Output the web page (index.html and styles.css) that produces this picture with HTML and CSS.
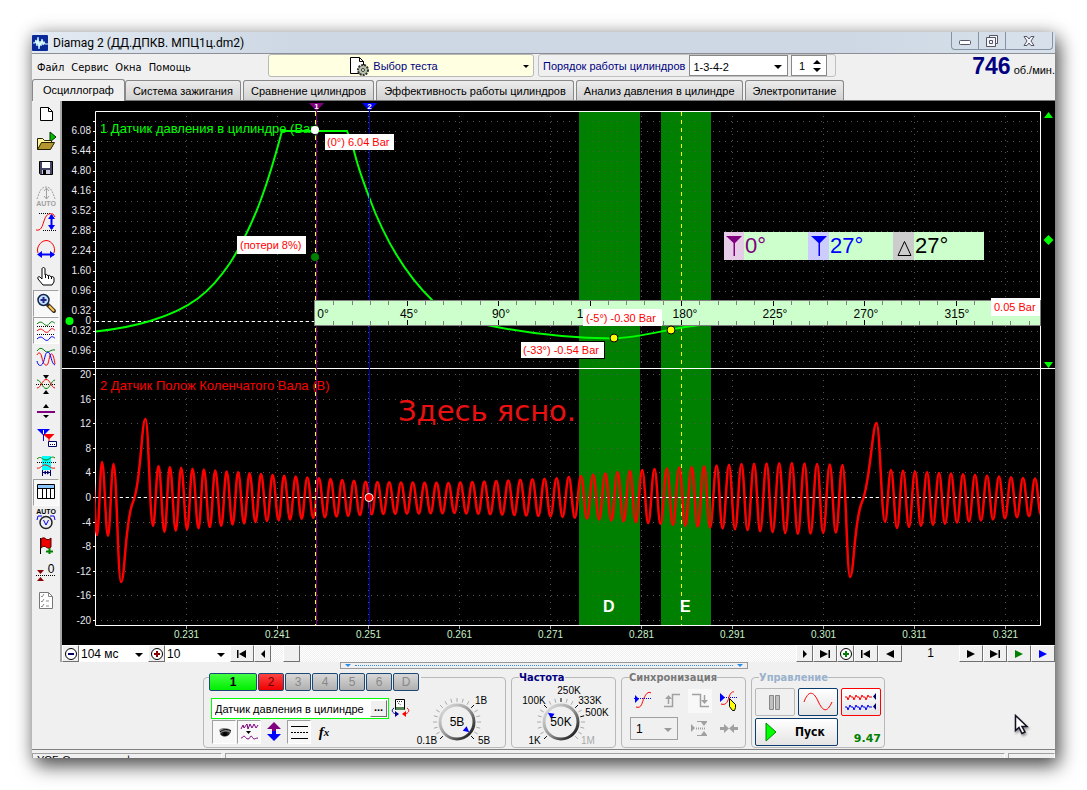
FILE: index.html
```html
<!DOCTYPE html>
<html lang="ru">
<head>
<meta charset="utf-8">
<title>Diamag 2</title>
<link rel="stylesheet" href="styles.css">
</head>
<body>
<main class="window">
  <header class="titlebar">
    <svg class="app-icon" width="16" height="16" viewBox="0 0 16 16"><rect width="16" height="16" rx="1" fill="#0a2a9a"/><path d="M1 8h2l1-3 1 6 1-9 1 12 1-8 1 5 1-7 1 6 1-3 1 2h3" fill="none" stroke="#dff" stroke-width="1.2"/></svg>
    <span class="title">Diamag 2 (ДД.ДПКВ. МПЦ1ц.dm2)</span>
    <div class="winbtns">
      <button aria-label="Свернуть"><svg width="14" height="14" viewBox="0 0 14 14"><rect x="1.500" y="6.500" width="11" height="4" rx="1" fill="#fff" stroke="#556"/></svg></button>
      <button aria-label="Развернуть"><svg width="14" height="14" viewBox="0 0 14 14"><path d="M4.500 3.500v-2h8v8h-2M1.500 3.500h9v9h-9zM4.500 6.500h3v3h-3z" fill="#f4f6f9" stroke="#556"/></svg></button>
      <button class="close" aria-label="Закрыть"><svg width="14" height="14" viewBox="0 0 14 14"><path d="M2 2.500h3l2 2.500 2-2.500h3L9 7l3 4.500H9L7 9l-2 2.500H2L5 7z" fill="#f4f6f9" stroke="#556"/></svg></button>
    </div>
  </header>

  <div class="menurow">
    <nav class="menu"><a href="#">Файл</a><a href="#">Сервис</a><a href="#">Окна</a><a href="#">Помощь</a></nav>
    <button class="testpick">
      <svg width="22" height="22" viewBox="0 0 22 22"><path d="M2.500 2.500h9l4 4v12h-13z" fill="#fff" stroke="#000"/><path d="M11.500 2.500v4h4" fill="none" stroke="#000"/><circle cx="15" cy="15" r="5" fill="#b8c4a8" stroke="#333" stroke-width="2" stroke-dasharray="2 1"/><circle cx="15" cy="15" r="1.500" fill="#fff" stroke="#333"/></svg>
      <span>Выбор теста</span><i class="tri"></i>
    </button>
    <div class="order">
      <label for="ord">Порядок работы цилиндров</label>
      <span class="combo ord-combo"><select id="ord"><option>1-3-4-2</option></select></span>
      <span class="spin"><input aria-label="Цилиндр" value="1"><svg width="10" height="14" viewBox="0 0 10 14"><path d="M1 5L5 1l4 4zM1 9h8l-4 4z"/></svg></span>
    </div>
    <div class="rpm"><b>746</b><span>об./мин.</span></div>
  </div>

  <div class="tabs" role="tablist">
    <button class="tab active" role="tab">Осциллограф</button>
    <button class="tab" role="tab">Система зажигания</button>
    <button class="tab" role="tab">Сравнение цилиндров</button>
    <button class="tab" role="tab">Эффективность работы цилиндров</button>
    <button class="tab" role="tab">Анализ давления в цилиндре</button>
    <button class="tab" role="tab">Электропитание</button>
  </div>

  <div class="work">
    <aside class="tools">
      <button aria-label="Новый"><svg viewBox="0 0 26 27"><path d="M7.500 6.500h8l4 4v9h-12z" fill="#fff" stroke="#000"/><path d="M15.500 6.500v4h4" fill="none" stroke="#000"/></svg></button>
      <button aria-label="Открыть"><svg viewBox="0 0 26 27"><path d="M17 4l6 5-6 5z" fill="#0b0" stroke="#030"/><path d="M4.500 21.500v-11h5l2 2h7v3" fill="#fff29a" stroke="#220"/><path d="M4.500 21.500l4-7h13l-4 7z" fill="#b59530" stroke="#220"/></svg></button>
      <button aria-label="Сохранить"><svg viewBox="0 0 26 27"><path d="M6.500 6.500h13v13h-12l-1-1z" fill="#446" stroke="#000"/><path d="M9 7h8v6H9z" fill="#fff"/><path d="M9 15h8v4H9z" fill="#ccd"/><path d="M10 15h3v4h-3z" fill="#000"/></svg></button>
      <button aria-label="Авто" disabled><svg viewBox="0 0 26 27"><g fill="none" stroke="#a0a0a0"><path d="M4 17c2-5 3-12 9-12s7 7 9 12" stroke-dasharray="2 1"/><path d="M13.500 7v10M11 9l2.500-3L16 9M11 14l2.500 3 2.500-3"/></g><text x="13" y="24" class="t-auto" fill="#a0a0a0">AUTO</text></svg></button>
      <button aria-label="Амплитуда"><svg viewBox="0 0 26 27"><path d="M6 4.500h11M10 21.500h13" stroke="#000" stroke-dasharray="1 1"/><path d="M3 21c5 1 6-3 8-9s4-8 9-7l2 3" fill="none" stroke="red"/><path d="M18.500 6v14" stroke="#00f" stroke-width="2"/><path d="M15 10l3.500-5L22 10zM15 16l3.500 5 3.500-5z" fill="#00f"/></svg></button>
      <button aria-label="Период"><svg viewBox="0 0 26 27"><path d="M5 17c-2-5 2-12 8-12.500 6 0 10 7 8 12.500" fill="none" stroke="red"/><path d="M6 18.500h15" stroke="#00f" stroke-width="2"/><path d="M9 15l-5 3.500L9 22zM17 15l5 3.500-5 3.500z" fill="#00f"/></svg></button>
      <button aria-label="Рука"><svg viewBox="0 0 26 27"><path d="M10 22l-5-6c-1-2 1-3 2-2l2 2V6c0-2 3-2 3 0v6c1-1 2-1 3 1 1-1 2-1 3 1 1-1 3 0 3 1v4l-2 3z" fill="#fff" stroke="#000"/><path d="M12.500 12v3M15.500 13v3M18.500 14v2" stroke="#000"/></svg></button>
      <button class="on" aria-label="Лупа"><svg viewBox="0 0 26 27"><path d="M15 15l6 6" stroke="#432" stroke-width="4" stroke-linecap="round"/><path d="M16 16l5 5" stroke="#fc5" stroke-width="2"/><circle cx="10.500" cy="10" r="5.500" fill="#bfe0ff" stroke="#124" stroke-width="1.500"/><path d="M10.500 7v6M7.500 10h6" stroke="#228" stroke-width="2"/></svg></button>
      <button class="on" aria-label="Раздельно"><svg viewBox="0 0 26 27"><g fill="none"><path d="M4 7c3-3 5-2 7 0s4 2 6-1 4 0 5 0" stroke="green"/><path d="M4 14c3-3 5-2 7 0s4 2 6-1 4 0 5 0" stroke="red"/><path d="M4 22c3-3 5-2 7 0s4 2 6-1 4 0 5 0" stroke="blue"/><path d="M4 9.500h18M4 17.500h18" stroke="#000" stroke-dasharray="1 1"/></g></svg></button>
      <button aria-label="Вместе"><svg viewBox="0 0 26 27"><g fill="none"><path d="M4 7c3-4 5-3 8 0s6-2 10-1" stroke="green"/><path d="M4 11c2-4 4-2 5 3s3 8 5 7 2-10 4-11 3 4 4 10" stroke="red"/><path d="M4 17c1 5 4 6 6 2s2-11 5-11 3 12 7 13" stroke="blue"/></g></svg></button>
      <button aria-label="Сжать"><svg viewBox="0 0 26 27"><path d="M10 4h6l-3 4zM10 23h6l-3-4z"/><path d="M3 13.500h20" stroke="#000" stroke-dasharray="1 1"/><g fill="none"><path d="M4 9c4 0 5 8 9 8.500s5-8 9-8.500" stroke="green"/><path d="M4 17c4 0 5-8 9-8.500s5 8 9 8.500" stroke="red"/></g></svg></button>
      <button aria-label="Уровень"><svg viewBox="0 0 26 27"><path d="M10 10l3-4 3 4zM10 17l3 3 3-3z"/><path d="M4 14h18" stroke="purple" stroke-width="2"/></svg></button>
      <button aria-label="Маркеры"><svg viewBox="0 0 26 27"><path d="M9.500 9h12l-5 5v6h-1v-6z" fill="red"/><path d="M4 4h13l-6 6v6h-1v-6z" fill="#00f"/><path d="M10.500 5v4" stroke="#fff"/><path d="M15.500 16.500h8v5h-8z" fill="#fff" stroke="#006"/><path d="M17 19.500h5" stroke="#006" stroke-dasharray="1 1"/></svg></button>
      <button aria-label="Диапазон"><svg viewBox="0 0 26 27"><path d="M9 4h9v14H9z" fill="#0ff"/><path d="M4 10.500h19" stroke="#000" stroke-dasharray="1 1"/><g fill="none"><path d="M4 7c4-4 5 1 9 1s5-5 9-2" stroke="green"/><path d="M4 16c4 1 5-4 9-3s5 4 9 3" stroke="red"/></g><path d="M9.500 18v6M17.500 18v6M10 20.500h7" stroke="#006"/><path d="M10 20.500l3-2v4zM17 20.500l-3-2v4z" fill="#006"/></svg></button>
      <button class="on" aria-label="Таблица"><svg viewBox="0 0 26 27"><path d="M4.500 5.500h17v14h-17z" fill="#fff" stroke="#000"/><path d="M5 6h16v3H5z" fill="#8cc8ff"/><path d="M4 9.500h18M9.500 9v11M13.500 9v11M17.500 9v11" stroke="#000"/></svg></button>
      <button aria-label="Авто вольт"><svg viewBox="0 0 26 27"><text x="13" y="8" class="t-auto">AUTO</text><path d="M4 14l1-4h4M22 14l-1-4h-4" fill="none" stroke="#00f"/><circle cx="13" cy="16.500" r="6" fill="#eee" stroke="#222" stroke-width="1.500"/><path d="M10.500 14l2.500 5 2.500-5" fill="none" stroke="#00f"/></svg></button>
      <button aria-label="Флаг"><svg viewBox="0 0 26 27"><path d="M7.500 5v16" stroke="#000"/><path d="M8 6c2-2 4-1 5 0s3 1 5-1v9c-2 2-4 1-5 0s-3-1-5 1z" fill="#e00" stroke="#500"/><path d="M16.500 15v6M13 18.500h7" stroke="green" stroke-width="2"/></svg></button>
      <button aria-label="Ноль"><svg viewBox="0 0 26 27"><path d="M4 10h7l-3.500 4zM4 21h7l-3.500-4z" fill="#800"/><path d="M3 15.500h20" stroke="#000" stroke-dasharray="1 1"/><text x="18" y="13" class="t-zero">0</text></svg></button>
      <button aria-label="Список"><svg viewBox="0 0 26 27"><path d="M6.500 5.500h9l4 4v12h-13z" fill="#fff" stroke="#777"/><path d="M15.500 5.500v4h4M8 9l1 1 2-3M8 14l1 1 2-3M8 19l1 1 2-3M13 14h3M13 19h3" fill="none" stroke="#888"/></svg></button>
    </aside>

    <div class="scope">
      <svg class="chart" viewBox="62 101 993 544" role="img" aria-label="Осциллограмма">
        <defs>
          <clipPath id="plot"><rect x="95" y="111" width="945" height="515"/></clipPath>
        </defs>
        <rect x="62" y="101" width="993" height="544" fill="#000"/>
        <rect x="579" y="112" width="61" height="513" fill="#008000"/>
        <rect x="661" y="112" width="50" height="513" fill="#008000"/>
        <g id="grid"></g>
        <path class="axis" d="M95.500 625.500V111.500H1040.500V625.500H95.500M62 368.500H1055"/>
        <path d="M96 321.500H1040M96 497.500H1040" stroke="#fff" stroke-dasharray="3 3"/>
        <path d="M681.500 112V625" stroke="#ff0" stroke-dasharray="4 4"/>
        <text x="100" y="133" class="name" fill="#0f0">1 Датчик давления в цилиндре (Bar)</text>
        <text x="100" y="390" class="name" fill="#f00">2 Датчик Полож Коленчатого Вала (В)</text>
        <path class="press" d="M96 331.500C118 329 134 326 150 321C190 309 210 293 230 263C255 224 269 180 282 131H347L351 142L354 151C360 175 366 188 369 197C386 243 408 277 433 301M487 325C520 332 565 338 614 338.500C645 337 670 328 700 325"/>
        <g clip-path="url(#plot)"><path id="wave" class="wave"/></g>
        <path d="M315.500 112V625" stroke="#ff0" stroke-dasharray="4 4"/>
        <path d="M316.500 108V625" stroke="#800080"/>
        <path d="M369.500 108V625" stroke="#0000c0"/>
        <path d="M309 103h15l-7.500 8z" fill="#800080"/><path d="M362 103h15l-7.500 8z" fill="#00f"/>
        <text x="316.500" y="109" class="mk">1</text><text x="369.500" y="109" class="mk">2</text>
        <rect x="314.500" y="300.500" width="726" height="25" fill="#cfc" stroke="#808080"/>
        <g id="ruler"></g>
        <circle cx="315" cy="130" r="4" fill="#fff"/>
        <circle cx="315" cy="257" r="4" fill="#008000"/>
        <circle cx="69.500" cy="321" r="4" fill="#0f0"/>
        <circle cx="369" cy="497.500" r="4" fill="red" stroke="#fff"/>
        <circle cx="614" cy="338" r="4" fill="#ff0" stroke="#000"/>
        <circle cx="671" cy="330" r="4" fill="#ff0" stroke="#000"/>
        <path d="M1044 118h9l-4.500-6zM1048.500 235l5 5-5 5-5-5zM1044 362h9l-4.500 6z" fill="#0f0"/>
        <g fill="#fff">
          <rect x="325" y="134" width="69" height="16"/><rect x="237" y="236" width="69" height="18"/>
          <rect x="583" y="309" width="79" height="17"/><rect x="520.500" y="341.500" width="84" height="17" stroke="#000"/>
          <rect x="991" y="298" width="49" height="18"/>
        </g>
        <g class="note">
          <text x="327" y="146">(0°) 6.04 Bar</text><text x="240" y="249">(потери 8%)</text>
          <text x="586" y="322">(-5°) -0.30 Bar</text><text x="523" y="354">(-33°) -0.54 Bar</text><text x="994" y="311">0.05 Bar</text>
        </g>
        <rect x="724" y="232" width="260" height="28" fill="#cfc"/>
        <rect x="724" y="232" width="20" height="28" fill="#e6cce6"/><rect x="808" y="232" width="21" height="28" fill="#ccf"/><rect x="893" y="232" width="21" height="28" fill="#ccc"/>
        <path d="M726 236h16l-7 7v13h-1.500v-13z" fill="#800080"/><path d="M811 236h16l-7 7v13h-1.500v-13z" fill="#00f"/><path d="M904.500 241.500l6.500 14h-13z" fill="none" stroke="#000"/>
        <g class="deg"><text x="745" y="253" fill="#800080">0°</text><text x="830" y="253" fill="#00f">27°</text><text x="915" y="253">27°</text></g>
        <text x="398" y="421" class="memo">Здесь ясно.</text>
        <text x="603" y="612" class="zone">D</text><text x="680" y="612" class="zone">E</text>
      </svg>

      <div class="scrollrow">
        <button class="sb w16"><svg width="14" height="14" viewBox="0 0 14 14"><circle cx="7" cy="7" r="5.500" fill="#fff" stroke="#000"/><path d="M4 7h6" stroke="#006" stroke-width="2"/></svg></button>
        <span class="combo flat w70"><select aria-label="Развертка"><option>104 мс</option></select></span>
        <button class="sb w16"><svg width="14" height="14" viewBox="0 0 14 14"><circle cx="7" cy="7" r="5.500" fill="#fff" stroke="#000"/><path d="M4 7h6M7 4v6" stroke="#800" stroke-width="2"/></svg></button>
        <span class="combo flat w65"><select aria-label="Масштаб"><option>10</option></select></span>
        <button class="sb w24"><svg width="12" height="8" viewBox="0 0 12 8"><path d="M1 0h1.500v8H1zM10 0v8L3 4z"/></svg></button>
        <button class="sb w16"><svg width="8" height="8" viewBox="0 0 8 8"><path d="M6 0v8L2 4z"/></svg></button>
        <div class="track"><button class="sb thumb" aria-label="Прокрутка"></button></div>
        <button class="sb w16"><svg width="8" height="8" viewBox="0 0 8 8"><path d="M2 0v8l4-4z"/></svg></button>
        <button class="sb w24"><svg width="12" height="8" viewBox="0 0 12 8"><path d="M9.500 0H11v8H9.500zM1 0v8l8-4z"/></svg></button>
        <button class="sb w16"><svg width="14" height="14" viewBox="0 0 14 14"><circle cx="7" cy="7" r="5.500" fill="#fff" stroke="#000"/><path d="M4 7h6M7 4v6" stroke="green" stroke-width="2"/></svg></button>
        <button class="sb w24"><svg width="12" height="8" viewBox="0 0 12 8"><path d="M1 0h1.500v8H1zM10 0v8L3 4z"/></svg></button>
        <button class="sb w24"><svg width="10" height="8" viewBox="0 0 10 8"><path d="M9 0v8L1 4z"/></svg></button>
        <output class="page">1</output>
        <button class="sb w24"><svg width="10" height="8" viewBox="0 0 10 8"><path d="M1 0v8l8-4z"/></svg></button>
        <button class="sb w24"><svg width="12" height="8" viewBox="0 0 12 8"><path d="M9.500 0H11v8H9.500zM1 0v8l8-4z"/></svg></button>
        <button class="sb w24"><svg width="10" height="8" viewBox="0 0 10 8"><path d="M1 0v8l8-4z" fill="green"/></svg></button>
        <button class="sb w24"><svg width="10" height="8" viewBox="0 0 10 8"><path d="M1 0v8l8-4z" fill="#00f"/></svg></button>
      </div>
    </div>
  </div>

  <div class="splitter"><i class="sp-tri"></i><i class="sp-dots"></i><i class="sp-tri"></i></div>

  <section class="panels">
    <div class="group g-chan">
      <div class="chtabs">
        <button class="ch c1">1</button><button class="ch c2">2</button><button class="ch">3</button><button class="ch">4</button><button class="ch">5</button><button class="ch">6</button><button class="ch">D</button>
      </div>
      <div class="chan-left">
        <div class="inrow">
          <span class="sensor"><input aria-label="Датчик" value="Датчик давления в цилиндре"><button>...</button></span>
          <button class="plain"><svg width="20" height="20" viewBox="0 0 20 20"><path d="M4.500 1.500h9v10h-9z" fill="#fff" stroke="#000"/><path d="M5 9h8v3H5z" fill="#585"/><path d="M6 3.500h6M7 5l3 2" stroke="#333" stroke-dasharray="1 1"/><path d="M3 10c-3 2-2 5 2 6" fill="none" stroke="#008"/><path d="M4 13l4 3-4 3z" fill="#008"/><path d="M16 10c3 2 2 5-2 6" fill="none" stroke="red"/><path d="M15 13l-4 3 4 3z" fill="red"/></svg></button>
        </div>
        <div class="icrow">
          <button class="ic on"><svg viewBox="0 0 24 24"><path d="M7 10c3-3 9-2 12 0v3h-4l-3-1-4 1z" fill="#888"/><path d="M8 14c2-3 7-3 10-1-1 4-7 5-10 1z" fill="#222"/><circle cx="13" cy="14" r="2"/><path d="M8 12c3-3 8-3 11-1" stroke="#000" fill="none"/></svg></button>
          <button class="ic on"><svg viewBox="0 0 24 24"><path d="M4 9l2-4 1 3 3-4 1 5 2-5 2 4 2-4 2 4 2-3M4 18c2 0 2-2 3-2s2 3 4 3 2-3 3-3 2 3 3 3 2-1 4-1" fill="none" stroke="#800080"/><path d="M9 11h5l-2.500 3z"/></svg></button>
          <button class="ic"><svg viewBox="0 0 24 24"><path d="M12 2l7 7h-5v3h-4V9H5z" fill="#800080"/><path d="M12 21l7-7h-5v-3h-4v3H5z" fill="#00f"/></svg></button>
          <button class="ic on"><svg viewBox="0 0 24 24"><path d="M4 6.500h17M4 18.500h17" stroke="#000"/><path d="M4 12.500h17" stroke="#000" stroke-dasharray="2 1"/></svg></button>
          <button class="ic fx">f<sub>x</sub></button>
        </div>
      </div>
      <svg class="knob" id="knob-v" viewBox="411 680 94 66" width="94" height="66"></svg>
    </div>
    <div class="group g-freq"><h2>Частота</h2><svg class="knob" id="knob-f" viewBox="512 680 104 66" width="104" height="66"></svg></div>
    <div class="group g-sync"><h2>Синхронизация</h2>
      <div class="syncgrid">
        <button class="plain"><svg width="24" height="24" viewBox="0 0 24 24"><path d="M4 9.500h17" stroke="#00f" stroke-dasharray="1 1"/><path d="M5 6v8l4-4z" fill="#00f"/><path d="M6 18c6 2 6-5 8-9s4-7 7-5" fill="none" stroke="red"/></svg></button>
        <button class="plain"><svg width="24" height="24" viewBox="0 0 24 24"><path d="M5 17.500h8.500v-12H21M9.500 15V8" fill="none" stroke="#a0a0a0" stroke-width="1.500"/><path d="M6 10l3.500-4L13 10z" fill="#a0a0a0"/></svg></button>
        <button class="plain dither"><svg width="24" height="24" viewBox="0 0 24 24"><path d="M4 5.500h8.500v12H21M16.500 6v7" fill="none" stroke="#a0a0a0" stroke-width="1.500"/><path d="M13 11l3.500 4 3.500-4z" fill="#a0a0a0"/></svg></button>
        <button class="plain"><svg width="24" height="24" viewBox="0 0 24 24"><path d="M3 8.500h18" stroke="#00f" stroke-dasharray="1 1"/><path d="M3 4v9l5-4.500z" fill="#00f"/><path d="M4 15c6 2 7-4 8-7s3-6 5-5" fill="none" stroke="red"/><path d="M12.500 9.500l6 6v3l-1 3h-2l-3-4z" fill="#ff0" stroke="#000"/></svg></button>
        <span class="combo sync-combo"><select aria-label="Канал" disabled><option>1</option></select></span>
        <button class="plain"><svg width="24" height="24" viewBox="0 0 24 24"><path d="M3 7v8l4-4z" fill="#a0a0a0"/><path d="M8 11.500h9" stroke="#a0a0a0" stroke-dasharray="1 1" stroke-width="2"/><path d="M9 4.500h10M9 18.500h10" stroke="#a0a0a0"/><path d="M13 5h6l-3 4zM13 18h6l-3-4z" fill="#a0a0a0"/></svg></button>
        <button class="plain"><svg width="24" height="24" viewBox="0 0 24 24"><path d="M3 10h4V7l5 4.500L7 16v-3H3zM21 10h-4V7l-5 4.500 5 4.500v-3h4z" fill="#a0a0a0"/></svg></button>
      </div>
    </div>
    <div class="group g-ctl"><h2>Управление</h2>
      <div class="ctlgrid">
        <button class="cb off" aria-label="Пауза"><svg width="36" height="24" viewBox="0 0 36 24"><path d="M12.500 5.500h4v14h-4zM18.500 5.500h4v14h-4z" fill="#c0c0c0" stroke="#888"/></svg></button>
        <button class="cb" aria-label="Синус"><svg width="36" height="24" viewBox="0 0 36 24"><path d="M4 12C8 1 13 0 18 11s9 12 14 1" fill="none" stroke="red"/></svg></button>
        <button class="cb red" aria-label="Поток"><svg width="36" height="24" viewBox="0 0 36 24"><path d="M2 7h2l1 3 2-5 1 2h2l1 3 2-5 1 2h2l1 3 2-5 1 2h2l1 3 2-5 1 2h3" fill="none" stroke="red"/><path d="M2 17h2l1 3 2-5 1 2h2l1 3 2-5 1 2h2l1 3 2-5 1 2h2l1 3 2-5 1 2h3" fill="none" stroke="#00f"/><path d="M33 3v7l-3-3.500zM33 13v7l-3-3.500z" fill="#006"/></svg></button>
        <button class="cb start"><svg width="12" height="20" viewBox="0 0 12 20"><path d="M1 1v18l10-9z" fill="#0f0" stroke="#080"/></svg><span>Пуск</span></button>
        <output class="val">9.47</output>
      </div>
    </div>
  </section>

  <footer class="status"><span class="s1">УСБ Осциллограф</span><span class="s2"></span><span class="s3"></span></footer>
</main>
<svg class="cursor" width="16" height="22" viewBox="0 0 16 22"><path d="M1.500 1.500v15l3.500-3 3 6 3-1.500-3-5.500h5z" fill="#fff" stroke="#112" stroke-width="1.500"/></svg>
<script src="chart.js"></script>
</body>
</html>
```

FILE: styles.css
```css
* { box-sizing: border-box; }
body {
  margin: 0; height: 100vh; padding: 32px; background: #fff; overflow: hidden;
  font: 11px/14px "Liberation Sans", Arial, sans-serif; color: #000;
}
button, input, select { font: inherit; color: inherit; margin: 0; padding: 0; border: 0; border-radius: 0; background: none; }
button { display: flex; align-items: center; justify-content: center; }
svg { display: block; flex: none; }
h2 { margin: 0; }

.window {
  display: flex; flex-direction: column; height: 100%; background: #f0f0f0; overflow: hidden;
  box-shadow: 4px 8px 18px rgba(0,0,0,.65), 0 0 16px rgba(0,0,0,.2);
}
.titlebar { display: flex; flex: none; align-items: center; height: 22px; border-bottom: 1px solid #8c8f98; background: linear-gradient(90deg, #e3eaf2, #cdd8e4 25%, #cdd8e4 80%, #d8e1eb); }
.title { flex: 1; padding-left: 5px; font: 12px/20px Roboto, sans-serif; }
.winbtns { display: flex; align-self: flex-start; height: 18px; margin-right: 2px; border: 1px solid #8593a5; border-top: 0; border-radius: 0 0 4px 4px; }
.winbtns button { width: 27px; border-right: 1px solid #8593a5; }
.winbtns .close { width: 46px; border: 0; }

.menurow { display: flex; flex: none; height: 25px; }
.menu { display: flex; gap: 7px; width: 236px; padding: 7px 0 0 5px; font: 11px/14px "DejaVu Sans Condensed", "DejaVu Sans", sans-serif; }
.menu a { color: #000; text-decoration: none; }
.testpick { position: relative; width: 266px; height: 23px; padding-right: 16px; gap: 3px; border: 1px solid #b8b8b8; border-radius: 3px; background: #ffffe1; color: #000080; }
.tri, .combo::after { position: absolute; right: 5px; top: 50%; border: 4px solid transparent; border-top-color: #000; border-bottom: 0; transform: translateY(-1px); content: ""; }
.tri { border-width: 3px; border-bottom: 0; right: 4px; }
.order { display: flex; width: 298px; height: 23px; margin-left: 4px; padding-left: 4px; border: 1px solid #c0c0c0; border-radius: 3px; color: #000080; line-height: 22px; }
.combo { position: relative; display: flex; background: #fff; color: #000; }
.combo select { width: 100%; appearance: none; opacity: 1; }
.ord-combo { flex: 1; height: 21px; margin-left: 4px; padding-left: 3px; border: 1px solid #888; }
.spin { display: flex; align-items: center; width: 36px; height: 21px; margin: 0 8px 0 3px; padding-left: 7px; border: 1px solid #888; background: #fff; color: #000; }
.spin input { flex: 1; width: 0; }
.spin svg { margin-right: 4px; }
.rpm { display: flex; flex: 1; justify-content: flex-end; align-items: baseline; gap: 3px; white-space: nowrap; }
.rpm b { color: #000080; font-size: 23px; line-height: 24px; }

.tabs { display: flex; flex: none; align-items: flex-end; gap: 2px; height: 22px; border-bottom: 1px solid #777; }
.tab { height: 20px; padding: 0 7px; border: 1px solid #888; border-bottom: 0; border-radius: 3px 3px 0 0; background: linear-gradient(#ececec, #d2d2d2); white-space: nowrap; }
.tab.active { height: 22px; margin: 0 -2px -1px 0; padding: 0 10px 2px; background: #f0f0f0; }

.work { display: flex; flex: 1; min-height: 0; }
.tools { display: flex; flex-direction: column; width: 30px; padding-left: 1px; border-right: 2px solid #a8a8a8; }
.tools button { width: 26px; height: 27px; }
.tools svg { width: 26px; height: 27px; }
.on { border: 1px solid #a0a0a0; border-right-color: #fff; border-bottom-color: #fff; background: #f8f8f8; }
.t-auto { font: bold 7px "Liberation Sans", sans-serif; text-anchor: middle; }
.t-zero { font: 12px "Liberation Sans", sans-serif; text-anchor: middle; }

.scope { display: flex; flex: 1; flex-direction: column; min-width: 0; }
.chart { flex: 1; width: 100%; min-height: 0; background: #000; }
.axis { fill: none; stroke: #fff; }
.press { fill: none; stroke: #0f0; stroke-width: 2; }
.wave { fill: none; stroke: #f00; stroke-width: 2.5; stroke-linejoin: round; }
.chart text { font-family: "Liberation Sans", Arial, sans-serif; }
.name { font-size: 13px; }
.mk { font-size: 8px; font-weight: bold; fill: #fff; text-anchor: middle; }
.lab { font-size: 10px; fill: #e8e8f0; text-anchor: end; }
.time { font-size: 10px; fill: #c8f0c8; text-anchor: middle; }
.ang { font-size: 12px; text-anchor: middle; }
.note { font-size: 11px; fill: #f00; }
.deg { font-size: 22px; }
.chart .memo { font-family: "DejaVu Sans", sans-serif; font-size: 29px; fill: #e81010; }
.zone { font-size: 16px; font-weight: bold; fill: #fff; }

.scrollrow { display: flex; flex: none; height: 17px; font-size: 12px; line-height: 16px; background: #fff; }
.sb { flex: none; border: 1px solid #fff; border-right-color: #707070; border-bottom-color: #707070; background: #f0f0f0; }
.w16 { width: 17px; }
.w24 { width: 24px; }
.w70 { width: 69px; }
.w65 { width: 65px; }
.flat { padding-left: 2px; }
.track { flex: 1; padding-left: 12px; background: repeating-conic-gradient(#f0f0f0 0 25%, #fff 0 50%) 0 0 / 2px 2px; }
.thumb { width: 17px; height: 17px; }
.page { flex: none; width: 57px; background: #f0f0f0; text-align: center; }

.splitter { display: flex; flex: none; align-items: center; align-self: center; width: 408px; height: 7px; padding: 0 4px; gap: 4px; border: 1px solid #999; }
.sp-tri { border: 3px solid transparent; border-top-color: #2d8ceb; border-bottom: 0; }
.sp-dots { flex: 1; border-top: 1px dotted #2d8ceb; }

.panels { display: flex; flex: none; justify-content: center; gap: 5px; height: 81px; padding: 8px 0 1px 1px; border-bottom: 1px solid #808080; }
.group { border: 1px solid #b8b8b8; border-radius: 4px; }
.group h2 { width: max-content; margin: -7px 0 0 7px; font: bold 11px/14px "DejaVu Sans Condensed", "DejaVu Sans", sans-serif; background: #f0f0f0; color: #000080; }
.g-sync h2 { color: #787878; }
.g-ctl h2 { color: #9ab0cc; }
.g-chan { display: grid; grid-template: 16px 1fr / 1fr 94px; width: 303px; }
.g-freq { width: 105px; }
.g-sync { width: 125px; }
.g-ctl { width: 134px; }
.g-freq .knob { margin-top: -5px; }
.g-chan .knob { margin-top: -14px; }
.chtabs { display: flex; grid-column: 1 / 3; gap: 1px; margin: -5px 0 0 5px; width: 212px; height: 18px; background: #f0f0f0; }
.ch { width: 26px; border: 1px solid #1c4a78; border-radius: 2px; background: linear-gradient(#d8d8d8, #b0b0b0); color: #888; font-size: 12px; }
.c1 { width: 48px; background: linear-gradient(#4f4, #0e0); color: #000; font-weight: bold; }
.c2 { background: linear-gradient(#f44, #e00); color: #600; }
.chan-left { padding: 4px 0 0 7px; }
.inrow { display: flex; gap: 2px; }
.sensor { display: flex; width: 178px; height: 21px; padding: 1px; border: 1px solid #0f0; background: #fff; }
.sensor input { flex: 1; width: 0; padding-left: 2px; }
.sensor button { width: 17px; padding-bottom: 4px; border: 1px solid #fff; border-right-color: #707070; border-bottom-color: #707070; background: #f0f0f0; font-weight: bold; line-height: 8px; }
.icrow { display: flex; gap: 1px; padding: 1px 0 0 1px; }
.ic { width: 24px; height: 24px; }
.ic svg { width: 24px; height: 24px; }
.fx { font: italic bold 15px/20px "Liberation Serif", serif; }
.fx sub { font-size: 11px; line-height: 8px; }
.kt { font: 10px "Liberation Sans", sans-serif; text-anchor: middle; }
.kv { font: 12px "Liberation Sans", sans-serif; text-anchor: middle; }
.syncgrid { display: grid; grid-template-columns: 28px 28px 28px 24px; gap: 4px 1px; padding: 4px 0 0 8px; }
.plain { width: 24px; height: 24px; }
.dither { background: #f8f8f8; }
.inrow .plain { width: 20px; height: 20px; }
.sync-combo { grid-column: 1 / 3; width: 48px; height: 23px; padding-left: 5px; border: 1px solid #a0a0a0; background: #f0f0f0; font-size: 12px; }
.sync-combo::after { border-top-color: #999; }
.ctlgrid { display: grid; grid-template: 28px 28px / 40px 40px 40px; gap: 2px 3px; padding: 3px; }
.cb { border: 1px solid #0c3c6e; border-radius: 2px; background: linear-gradient(#fff, #e4e4e4); }
.off { border-color: #b8b8b8; background: #f0f0f0; }
.red { border-color: #f00; }
.start { grid-column: 1 / 3; justify-content: flex-start; gap: 18px; padding-left: 9px; font: bold 12px/14px "DejaVu Sans Condensed", "DejaVu Sans", sans-serif; }
.val { align-self: end; padding-bottom: 1px; text-align: right; color: #008000; font: bold 11px/12px "DejaVu Sans", sans-serif; }

.status { display: flex; flex: none; gap: 3px; height: 8px; padding-top: 3px; overflow: hidden; }
.status span { height: 18px; padding: 0 4px; border: 1px solid #a0a0a0; border-right-color: #fff; line-height: 12px; }
.s1 { width: 190px; }
.s2 { flex: 1; }
.s3 { width: 47px; }
.cursor { position: absolute; left: 1014px; top: 714px; filter: drop-shadow(1px 2px 1px rgba(0,0,0,.4)); }
```

FILE: chart.js
```js
(function () {
  var out = '';
  function line(x1, y1, x2, y2, attrs) {
    return '<path d="M' + x1 + ' ' + y1 + 'L' + x2 + ' ' + y2 + '" ' + attrs + '/>';
  }
  var dots = 'stroke="#555" stroke-dasharray="1 5"';
  var i, y, x;

  // upper channel: minor step 10, labels every 20
  for (i = -1; i <= 23; i++) {
    y = 131.5 + i * 10;
    out += line(101, y, 1039, y, dots) + line(93, y, 96, y, 'stroke="#fff"');
  }
  var p = ['6.08', '5.44', '4.80', '4.16', '3.52', '2.88', '2.24', '1.60', '0.96', '0.32', '-0.32', '-0.96'];
  for (i = 0; i < p.length; i++) {
    out += '<text class="lab" x="91" y="' + (134 + i * 20) + '">' + p[i] + '</text>';
  }
  out += '<text class="lab" x="91" y="324">0</text>' + line(93, 321.5, 96, 321.5, 'stroke="#fff"');

  // lower channel
  for (i = 0; i <= 10; i++) {
    y = Math.round(374 + i * 24.6) + 0.5;
    out += line(101, y, 1039, y, dots) + line(93, y, 96, y, 'stroke="#fff"');
    out += '<text class="lab" x="91" y="' + (y + 3) + '">' + (20 - i * 4) + '</text>';
  }

  // time axis
  for (i = 0; i < 10; i++) {
    x = 186.5 + i * 91;
    out += line(x, 116, x, 624, dots) + line(x, 626, x, 629, 'stroke="#aaa"');
    out += '<text class="time" x="' + x + '" y="638">' + (0.231 + i * 0.01).toFixed(3) + '</text>';
  }
  document.getElementById('grid').innerHTML = out;

  // crank angle ruler
  out = '';
  for (i = 1; i < 40; i++) {
    x = Math.round(315 + i * 18.3) + 0.5;
    if (x > 1038) break;
    var big = i % 5 === 0, s = big ? 'stroke="#000"' : 'stroke="#808080"', h = big ? 5 : 4;
    out += line(x, 301, x, 301 + h, s) + line(x, 325, x, 325 - h, s);
  }
  var a = [[323, '0°'], [409, '45°'], [501, '90°'], [580, '1'], [685, '180°'], [775, '225°'], [866, '270°'], [957, '315°']];
  a.forEach(function (t) { out += '<text class="ang" x="' + t[0] + '" y="318">' + t[1] + '</text>'; });
  document.getElementById('ruler').innerHTML = out;

  // crankshaft signal: alternating extremes joined by smooth segments
  var e = [[92, 462], [97, 535], [102, 462], [108, 536], [113.5, 464], [121, 582], 's', [145.5, 419], [153, 526]];
  function env(pts, x) {
    for (var k = 1; k < pts.length; k++) if (x <= pts[k][0]) break;
    k = Math.min(k, pts.length - 1);
    var u = (x - pts[k - 1][0]) / (pts[k][0] - pts[k - 1][0]);
    return pts[k - 1][1] + u * (pts[k][1] - pts[k - 1][1]);
  }
  var top = [[158, 466], [260, 474], [370, 482], [450, 483], [560, 478], [640, 470], [740, 464], [790, 463], [845, 465]];
  var bot = [[158, 532], [260, 521], [370, 514], [450, 513], [560, 517], [640, 523], [740, 530], [790, 534], [845, 532]];
  var n = 57, x0 = 158.5, x1 = 842.5;
  for (i = 0; i <= n; i++) {
    var u = i / n;
    x = x0 + (x1 - x0) * (u * 0.94 + u * u * 0.06);
    e.push([x, env(top, x)]);
    if (i < n) e.push([x + 6, env(bot, x)]);
  }
  e.push([850, 577], 's', [876.5, 423], [885, 522]);
  for (x = 891; x < 1045; x += 12) {
    e.push([x, 470 + (x - 891) * 0.06], [x + 6, 528 - (x - 891) * 0.09]);
  }
  var d = 'M' + e[0][0] + ' ' + e[0][1], prev = e[0], slow = false;
  for (i = 1; i < e.length; i++) {
    if (e[i] === 's') { slow = true; continue; }
    var q = e[i], w = q[0] - prev[0];
    if (slow) {
      d += 'C' + (prev[0] + 4) + ' ' + prev[1] + ' ' + (prev[0] + 4) + ' 520 ' + (prev[0] + 12) + ' 502';
      d += 'C' + (prev[0] + 20) + ' 485 ' + (q[0] - 4) + ' ' + q[1] + ' ' + q[0] + ' ' + q[1];
      slow = false;
    } else {
      d += 'C' + (prev[0] + w * 0.4).toFixed(1) + ' ' + prev[1].toFixed(1) + ' ' + (q[0] - w * 0.4).toFixed(1) + ' ' + q[1].toFixed(1) + ' ' + q[0].toFixed(1) + ' ' + q[1].toFixed(1);
    }
    prev = q;
  }
  document.getElementById('wave').setAttribute('d', d);

  // rotary knobs
  function knob(id, cx, cy, value, angle, labels, strong) {
    var s = '<defs><linearGradient id="g' + id + '" x1="0" y1="0" x2="1" y2="1"><stop offset="0" stop-color="#e8e8e8"/><stop offset=".5" stop-color="#999"/><stop offset="1" stop-color="#000"/></linearGradient></defs>';
    for (var t = -225; t <= 45; t += 15) {
      var r = t * Math.PI / 180, on = strong.indexOf(t) >= 0;
      s += line(cx + 20 * Math.cos(r), cy + 20 * Math.sin(r), cx + 24 * Math.cos(r), cy + 24 * Math.sin(r), 'stroke="' + (on ? '#000' : '#aaa') + '"');
    }
    s += '<circle cx="' + cx + '" cy="' + cy + '" r="17" fill="#f0f0f0" stroke="url(#g' + id + ')" stroke-width="3"/>';
    s += '<path transform="translate(' + cx + ' ' + cy + ') rotate(' + angle + ')" d="M16 0l-6 -3v6z" fill="#00f"/>';
    s += '<text class="kv" x="' + cx + '" y="' + (cy + 4) + '">' + value + '</text>';
    labels.forEach(function (l) { s += '<text class="kt" x="' + l[0] + '" y="' + l[1] + '" fill="' + (l[3] || '#000') + '">' + l[2] + '</text>'; });
    document.getElementById(id).innerHTML = s;
  }
  knob('knob-v', 457, 722, '5В', 40, [[427, 744, '0.1В'], [481, 704, '1В'], [484, 744, '5В']], [-225, -45, 45]);
  knob('knob-f', 561, 722, '50K', -145, [[534, 704, '100K'], [569, 694, '250K'], [590, 704, '333K'], [597, 716, '500K'], [534.5, 744, '1K'], [588, 744, '1M', '#aaa']], [-225, -135, -90, -45, -15]);
})();
```
